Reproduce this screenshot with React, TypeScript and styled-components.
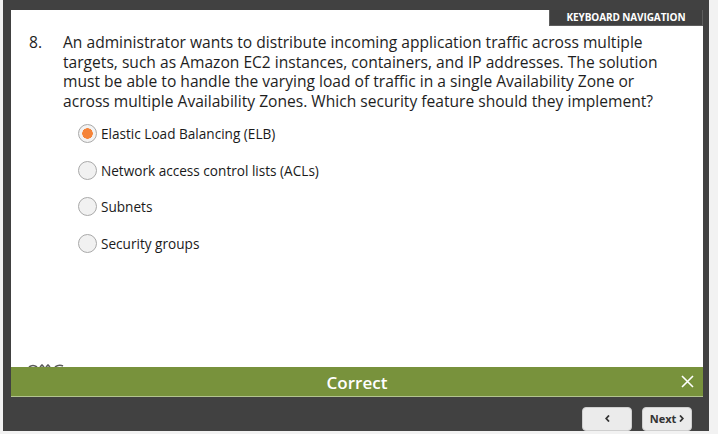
import styled, {createGlobalStyle} from "styled-components"

const GlobalStyle = createGlobalStyle`
  html, body {
    margin: 0;
    padding: 0;
    background: #f2f2f2;
    font-family: "Open Sans", "Liberation Sans", sans-serif;
  }
`

type Choice = {
  label: string
  selected?: boolean
}

const choices: Choice[] = [
  {label: "Elastic Load Balancing (ELB)", selected: true},
  {label: "Network access control lists (ACLs)"},
  {label: "Subnets"},
  {label: "Security groups"},
]

const Frame = styled.div`
  margin-left: 3px;
  width: 706px;
  height: 431px;
  background: #414141;
  display: flex;
  flex-direction: column;
  overflow: hidden;
`

const Panel = styled.div`
  position: relative;
  margin: 10px 6px 0 8px;
  height: 358px;
  background: #ffffff;
  display: flex;
  flex-direction: column;
`

const KeyboardTab = styled.div`
  position: absolute;
  top: 0;
  right: 0;
  width: 152px;
  height: 15px;
  background: #404040;
  border: 1px solid #5e5e5e;
  border-top: none;
  color: #ffffff;
  font-size: 10px;
  font-weight: 700;
  line-height: 15px;
  text-align: center;
  letter-spacing: -0.1px;
`

const Question = styled.div`
  display: flex;
  padding: 23px 28px 0 18px;
  color: #1e1e1e;
  font-size: 15.6px;
  line-height: 19.7px;
`

const Number = styled.div`
  width: 34px;
  flex: none;
`

const Choices = styled.div`
  display: flex;
  flex-direction: column;
  gap: 16.5px;
  padding: 12px 0 0 67px;
`

const ChoiceRow = styled.label`
  display: flex;
  align-items: center;
  gap: 4px;
  height: 20px;
  color: #1a1a1a;
  font-size: 13.6px;
`

const Radio = styled.span<{selected?: boolean}>`
  box-sizing: border-box;
  width: 19px;
  height: 19px;
  border-radius: 50%;
  border: 1px solid #a9a9a9;
  background: ${({selected}) =>
    selected ? "radial-gradient(circle, #f5843a 0 5px, #f3f3f3 5.5px)" : "#f1f1f1"};
  flex: none;
`

const Spacer = styled.div`
  flex: 1;
`

const LogoPeek = styled.div`
  height: 3px;
  padding-left: 17px;
  display: flex;
  align-items: flex-end;
`

const Feedback = styled.div`
  margin: 0 6px 0 8px;
  height: 30px;
  background: #78923c;
  border-bottom: 1px solid #b3c48f;
  display: flex;
  align-items: center;
  justify-content: center;
  position: relative;
  color: #ffffff;
  font-size: 17px;
  font-weight: 600;
  padding-top: 1px;
  box-sizing: border-box;
`

const CloseButton = styled.span`
  position: absolute;
  right: 9px;
  top: 8px;
  display: flex;
`

const NavBar = styled.div`
  flex: 1;
  display: flex;
  justify-content: flex-end;
  align-items: flex-start;
  gap: 10px;
  padding: 10px 17px 0 0;
`

const NavButton = styled.button`
  width: 50px;
  height: 24px;
  border: 1px solid #cfcfcf;
  border-radius: 4px;
  background: #ebebeb;
  color: #333333;
  font-family: "Open Sans", "Liberation Sans", sans-serif;
  font-size: 11px;
  font-weight: 700;
  padding: 0 0 2px;
  display: flex;
  align-items: center;
  justify-content: center;
  gap: 3px;
`

function Chevron({dir}: {dir: "left" | "right"}) {
  return (
    <svg width="5" height="7" viewBox="0 0 5 7">
      <path
        d={dir === "left" ? "M4 0.5 L1.2 3.5 L4 6.5" : "M1 0.5 L3.8 3.5 L1 6.5"}
        fill="none"
        stroke="#333"
        strokeWidth="1.8"
      />
    </svg>
  )
}

// only the top of the logo peeks out above the feedback bar
function AwsLogoTop() {
  return (
    <svg width="40" height="3" viewBox="0 0 40 3">
      <path
        d="M1 3 Q5 0 9 3 M12 3 L14 1 L16 3 M18 3 L20 1 L22 3 M27 3 Q31 0 35 2"
        fill="none"
        stroke="#5a5a5a"
        strokeWidth="1.6"
      />
    </svg>
  )
}

export default function App() {
  return (
    <>
      <GlobalStyle />
      <Frame>
        <Panel>
          <KeyboardTab>KEYBOARD NAVIGATION</KeyboardTab>
          <Question>
            <Number>8.</Number>
            <div>
              An administrator wants to distribute incoming application traffic across multiple targets, such as
              Amazon EC2 instances, containers, and IP addresses. The solution must be able to handle the varying
              load of traffic in a single Availability Zone or across multiple Availability Zones. Which security
              feature should they implement?
            </div>
          </Question>
          <Choices>
            {choices.map((c) => (
              <ChoiceRow key={c.label}>
                <Radio selected={c.selected} />
                {c.label}
              </ChoiceRow>
            ))}
          </Choices>
          <Spacer />
          <LogoPeek>
            <AwsLogoTop />
          </LogoPeek>
        </Panel>
        <Feedback>
          Correct
          <CloseButton>
            <svg width="13" height="13" viewBox="0 0 13 13">
              <path d="M1 1 L12 12 M12 1 L1 12" stroke="#fff" strokeWidth="1.6" />
            </svg>
          </CloseButton>
        </Feedback>
        <NavBar>
          <NavButton>
            <Chevron dir="left" />
          </NavButton>
          <NavButton>
            Next
            <Chevron dir="right" />
          </NavButton>
        </NavBar>
      </Frame>
    </>
  )
}
